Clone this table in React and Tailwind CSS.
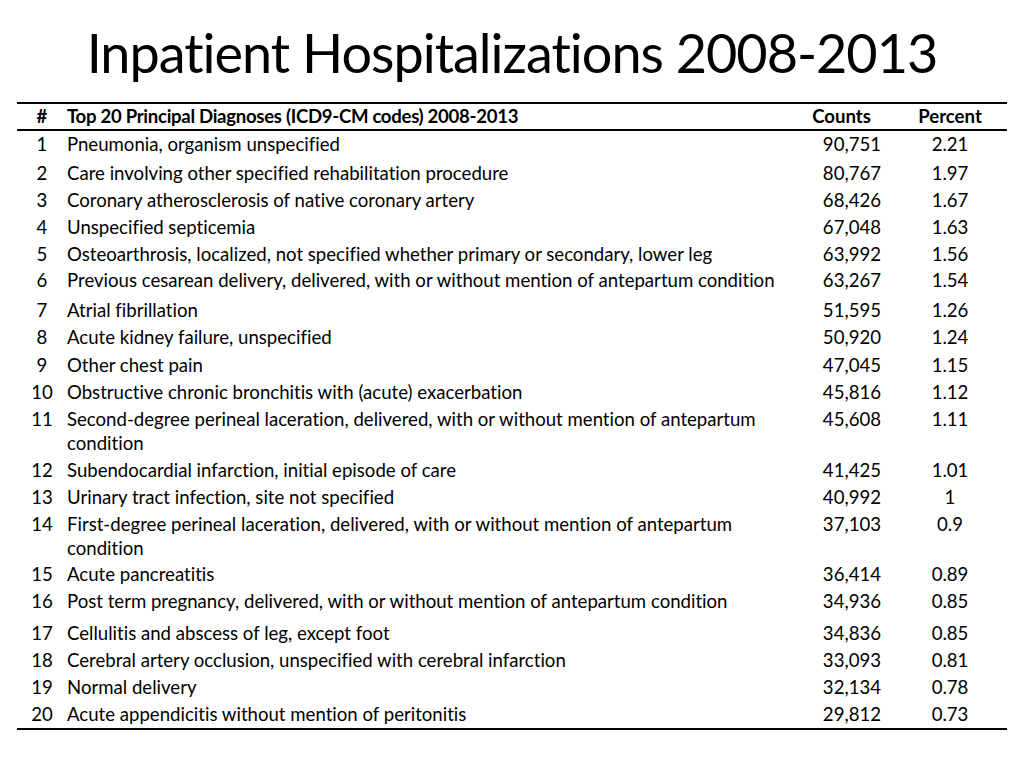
import React from "react";

const rows = [
  [1, "Pneumonia, organism unspecified", "90,751", "2.21", "h-[29px]"],
  [2, "Care involving other specified rehabilitation procedure", "80,767", "1.97", "h-[27px]"],
  [3, "Coronary atherosclerosis of native coronary artery", "68,426", "1.67", "h-[27px]"],
  [4, "Unspecified septicemia", "67,048", "1.63", "h-[27px]"],
  [5, "Osteoarthrosis, localized, not specified whether primary or secondary, lower leg", "63,992", "1.56", "h-[26px]"],
  [6, "Previous cesarean delivery, delivered, with or without mention of antepartum condition", "63,267", "1.54", "h-[30px]"],
  [7, "Atrial fibrillation", "51,595", "1.26", "h-[27px]"],
  [8, "Acute kidney failure, unspecified", "50,920", "1.24", "h-[28px]"],
  [9, "Other chest pain", "47,045", "1.15", "h-[27px]"],
  [10, "Obstructive chronic bronchitis with (acute) exacerbation", "45,816", "1.12", "h-[27px]"],
  [11, ["Second-degree perineal laceration, delivered, with or without mention of antepartum", "condition"], "45,608", "1.11", "h-[51px]"],
  [12, "Subendocardial infarction, initial episode of care", "41,425", "1.01", "h-[27px]"],
  [13, "Urinary tract infection, site not specified", "40,992", "1", "h-[27px]"],
  [14, ["First-degree perineal laceration, delivered, with or without mention of antepartum", "condition"], "37,103", "0.9", "h-[50px]"],
  [15, "Acute pancreatitis", "36,414", "0.89", "h-[27px]"],
  [16, "Post term pregnancy, delivered, with or without mention of antepartum condition", "34,936", "0.85", "h-[32px]"],
  [17, "Cellulitis and abscess of leg, except foot", "34,836", "0.85", "h-[27px]"],
  [18, "Cerebral artery occlusion, unspecified with cerebral infarction", "33,093", "0.81", "h-[27px]"],
  [19, "Normal delivery", "32,134", "0.78", "h-[27px]"],
  [20, "Acute appendicitis without mention of peritonitis", "29,812", "0.73", "h-[27px]"],
];

export default function App() {
  return (
    <div
      className="w-[1024px] h-[768px] bg-white text-black overflow-hidden [font-variant-ligatures:none]"
      style={{ fontFamily: "Lato, 'Open Sans', sans-serif" }}
    >
      <div className="h-[102px] flex items-start justify-center pt-[18px]">
        <h1 className="text-[54px] leading-[70px] font-normal tracking-[-1px]">Inpatient Hospitalizations 2008-2013</h1>
      </div>
      <div className="ml-[17px] w-[990px] border-t-2 border-b-2 border-black text-[18.6px] leading-[24px]">
        <div className="grid grid-cols-[50px_723px_103px_114px] h-[27px] border-b-2 border-black font-bold">
          <div className="text-center">#</div>
          <div className="whitespace-nowrap tracking-[-0.3px]">Top 20 Principal Diagnoses (ICD9-CM codes) 2008-2013</div>
          <div className="text-center">Counts</div>
          <div className="text-center">Percent</div>
        </div>
        {rows.map(([n, desc, count, pct, h]) => (
          <div key={n} className={"grid grid-cols-[50px_723px_103px_114px] pt-[1px] " + h}>
            <div className="text-center">{n}</div>
            <div className="whitespace-nowrap">
              {Array.isArray(desc) ? (
                <>
                  {desc[0]}
                  <br />
                  {desc[1]}
                </>
              ) : (
                desc
              )}
            </div>
            <div className="text-right pr-[12px]">{count}</div>
            <div className="text-center">{pct}</div>
          </div>
        ))}
      </div>
    </div>
  );
}
